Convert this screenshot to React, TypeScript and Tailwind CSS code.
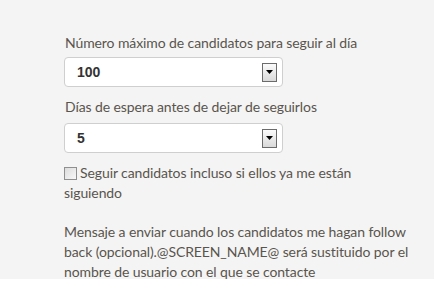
import React from "react";

function SelectBox({ value }: { value: string }) {
  return (
    <div className="flex h-[30px] w-[219px] items-center justify-between rounded-[4px] border border-[#cfcfcf] bg-white pl-[12px] pr-[5px]">
      <span className="font-['Liberation_Sans',sans-serif] text-[14px] font-bold tracking-normal text-[#333]">
        {value}
      </span>
      <span className="flex h-[19px] w-[15px] items-center justify-center border border-[#6b6b6b] bg-gradient-to-b from-[#fbfbfb] to-[#d9d9d9]">
        <svg width="7" height="4" viewBox="0 0 7 4">
          <path d="M0 0h7L3.5 4z" fill="#000" />
        </svg>
      </span>
    </div>
  );
}

export default function App() {
  return (
    <div className="min-h-screen bg-white">
      <div className="h-[279px] w-[434px] bg-[#f4f4f4] pl-[64px] pt-[33px] font-['Lato',sans-serif] text-[14px] tracking-[-0.1px] text-[#5a544e]">
        <div className="pl-[1px] leading-[20px]">Número máximo de candidatos para seguir al día</div>
        <div className="mt-[4px]">
          <SelectBox value="100" />
        </div>
        <div className="mt-[10px] pl-[1px] leading-[20px]">Días de espera antes de dejar de seguirlos</div>
        <div className="mt-[6px]">
          <SelectBox value="5" />
        </div>
        <div className="mt-[10px] pr-[60px] leading-[20px]">
          <span className="mr-[3px] inline-block h-[13px] w-[13px] translate-y-[2px] border border-[#8f8f8f] bg-gradient-to-br from-[#dcdcdc] to-[#f8f8f8]" />
          Seguir candidatos incluso si ellos ya me están siguiendo
        </div>
        <div className="mt-[19px] leading-[20px]">
          Mensaje a enviar cuando los candidatos me hagan follow back (opcional).@SCREEN_NAME@ será sustituido por el nombre de usuario con el que se contacte
        </div>
      </div>
    </div>
  );
}
